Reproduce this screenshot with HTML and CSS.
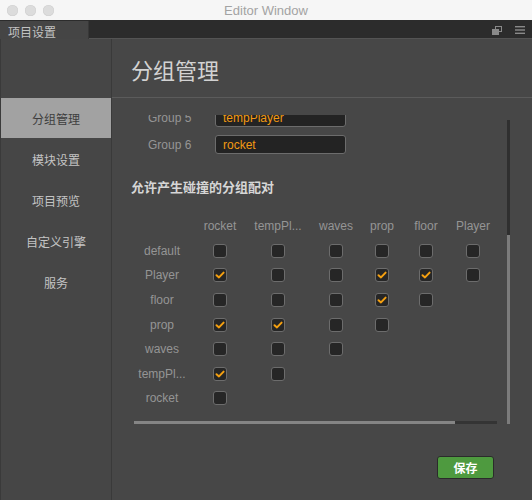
FILE: index.html
```html
<!DOCTYPE html>
<html lang="zh">
<head>
  <meta charset="UTF-8" />
  <title>Editor Window</title>
  <link rel="stylesheet" href="styles.css">
</head>
<body>
  <div class="window">
    <div class="titlebar">
      <div class="lights">
        <span class="light"></span>
        <span class="light"></span>
        <span class="light"></span>
      </div>
      <div class="title">Editor Window</div>
    </div>

    <div class="tabbar">
      <div class="tab">项目设置</div>
      <div class="tab-tools">
        <svg width="10" height="9" viewBox="0 0 10 9">
          <rect x="3.5" y="0.5" width="6" height="5" fill="none" stroke="#8a8a8a" stroke-width="1"/>
          <rect x="0.5" y="3.5" width="6" height="5" fill="#8a8a8a" stroke="#8a8a8a" stroke-width="1"/>
        </svg>
        <svg width="10" height="8" viewBox="0 0 10 8">
          <rect x="0" y="0" width="10" height="1.4" fill="#8a8a8a"/>
          <rect x="0" y="3.3" width="10" height="1.4" fill="#8a8a8a"/>
          <rect x="0" y="6.6" width="10" height="1.4" fill="#8a8a8a"/>
        </svg>
      </div>
    </div>

    <div class="panel">
      <div class="sidebar">
        <div class="nav-item active">分组管理</div>
        <div class="nav-item">模块设置</div>
        <div class="nav-item">项目预览</div>
        <div class="nav-item">自定义引擎</div>
        <div class="nav-item">服务</div>
      </div>

      <div class="main">
        <div class="main-header">分组管理</div>

        <div class="viewport">
          <div class="content">
            <div class="group-row">
              <span class="group-label">Group 5</span>
              <div class="group-input">tempPlayer</div>
            </div>
            <div class="group-row">
              <span class="group-label">Group 6</span>
              <div class="group-input">rocket</div>
            </div>

            <div class="section-title">允许产生碰撞的分组配对</div>

            <div class="matrix">
              <span></span>
              <span class="col-head">rocket</span>
              <span class="col-head">tempPl...</span>
              <span class="col-head">waves</span>
              <span class="col-head">prop</span>
              <span class="col-head">floor</span>
              <span class="col-head">Player</span>

              <span class="row-head">default</span>
              <span class="cell"><i class="cb"></i></span>
              <span class="cell"><i class="cb"></i></span>
              <span class="cell"><i class="cb"></i></span>
              <span class="cell"><i class="cb"></i></span>
              <span class="cell"><i class="cb"></i></span>
              <span class="cell"><i class="cb"></i></span>

              <span class="row-head">Player</span>
              <span class="cell"><i class="cb on"><svg viewBox="0 0 12 12"><path d="M2.5 6.2 L5 8.4 L9.6 3.6"/></svg></i></span>
              <span class="cell"><i class="cb"></i></span>
              <span class="cell"><i class="cb"></i></span>
              <span class="cell"><i class="cb on"><svg viewBox="0 0 12 12"><path d="M2.5 6.2 L5 8.4 L9.6 3.6"/></svg></i></span>
              <span class="cell"><i class="cb on"><svg viewBox="0 0 12 12"><path d="M2.5 6.2 L5 8.4 L9.6 3.6"/></svg></i></span>
              <span class="cell"><i class="cb"></i></span>

              <span class="row-head">floor</span>
              <span class="cell"><i class="cb"></i></span>
              <span class="cell"><i class="cb"></i></span>
              <span class="cell"><i class="cb"></i></span>
              <span class="cell"><i class="cb on"><svg viewBox="0 0 12 12"><path d="M2.5 6.2 L5 8.4 L9.6 3.6"/></svg></i></span>
              <span class="cell"><i class="cb"></i></span>
              <span></span>

              <span class="row-head">prop</span>
              <span class="cell"><i class="cb on"><svg viewBox="0 0 12 12"><path d="M2.5 6.2 L5 8.4 L9.6 3.6"/></svg></i></span>
              <span class="cell"><i class="cb on"><svg viewBox="0 0 12 12"><path d="M2.5 6.2 L5 8.4 L9.6 3.6"/></svg></i></span>
              <span class="cell"><i class="cb"></i></span>
              <span class="cell"><i class="cb"></i></span>
              <span></span>
              <span></span>

              <span class="row-head">waves</span>
              <span class="cell"><i class="cb"></i></span>
              <span class="cell"><i class="cb"></i></span>
              <span class="cell"><i class="cb"></i></span>
              <span></span>
              <span></span>
              <span></span>

              <span class="row-head">tempPl...</span>
              <span class="cell"><i class="cb on"><svg viewBox="0 0 12 12"><path d="M2.5 6.2 L5 8.4 L9.6 3.6"/></svg></i></span>
              <span class="cell"><i class="cb"></i></span>
              <span></span>
              <span></span>
              <span></span>
              <span></span>

              <span class="row-head">rocket</span>
              <span class="cell"><i class="cb"></i></span>
              <span></span>
              <span></span>
              <span></span>
              <span></span>
              <span></span>
            </div>
          </div>

          <div class="hscroll"><div class="hscroll-thumb"></div></div>
          <div class="vscroll"><div class="vscroll-thumb"></div></div>
        </div>

        <div class="footer">
          <button class="btn-save">保存</button>
        </div>
      </div>
    </div>
  </div>
</body>
</html>
```

FILE: styles.css
```css
body {
  margin: 0;
  background: #474747;
  font-family: "Liberation Sans", "Noto Sans CJK SC", sans-serif;
  font-size: 12px;
}

.window {
  width: 532px;
  height: 500px;
  display: flex;
  flex-direction: column;
  overflow: hidden;
}

/* title bar */
.titlebar {
  height: 20px;
  flex: none;
  background: #f6f6f6;
  display: flex;
  align-items: center;
  position: relative;
}

.lights {
  display: flex;
  gap: 7px;
  padding-left: 7px;
}

.light {
  width: 11px;
  height: 11px;
  border-radius: 50%;
  background: #dcdcdc;
  box-shadow: inset 0 0 0 0.5px #cfcfcf;
}

.title {
  position: absolute;
  left: 0;
  right: 0;
  text-align: center;
  color: #a3a3a3;
  font-size: 13px;
}

/* tab bar */
.tabbar {
  height: 18px;
  flex: none;
  background: #2c2c2c;
  border-bottom: 1px solid #545454;
  display: flex;
  align-items: flex-start;
  justify-content: space-between;
}

.tab {
  width: 89px;
  height: 19px;
  margin-top: 1px;
  box-sizing: border-box;
  padding: 2px 0 0 8px;
  background: #454545;
  border-right: 1px solid #383838;
  color: #c2c2c2;
  font-size: 12px;
}

.tab-tools {
  display: flex;
  align-items: center;
  gap: 13px;
  height: 18px;
  padding: 1px 7px 0 0;
}

/* panel */
.panel {
  flex: 1;
  display: flex;
  min-height: 0;
}

.sidebar {
  width: 110px;
  flex: none;
  background: #464646;
  border-left: 1px solid #3a3a3a;
  border-right: 1px solid #3a3a3a;
  padding-top: 59px;
}

.nav-item {
  height: 40px;
  margin-bottom: 1px;
  display: flex;
  align-items: center;
  justify-content: center;
  color: #c4c4c4;
  font-size: 12px;
}

.nav-item.active {
  background: #a2a2a2;
  color: #3e3e3e;
}

.main {
  flex: 1;
  display: flex;
  flex-direction: column;
  background: #474747;
  min-width: 0;
}

.main-header {
  height: 59px;
  flex: none;
  box-sizing: border-box;
  padding: 20px 0 0 19px;
  border-bottom: 1px solid #5b5b5b;
  color: #d2d2d2;
  font-size: 22px;
  line-height: 26px;
}

.viewport {
  height: 311px;
  margin-top: 17px;
  flex: none;
  overflow: hidden;
  position: relative;
}

.content {
  margin-top: -7px;
  padding-left: 19px;
}

.group-row {
  display: flex;
  align-items: center;
  height: 19px;
  margin-bottom: 8px;
  padding-left: 17px;
}

.group-label {
  width: 67px;
  color: #959595;
}

.group-input {
  width: 131px;
  height: 19px;
  box-sizing: border-box;
  padding: 2px 0 0 7px;
  background: #232323;
  border: 1px solid #6c6c6c;
  border-radius: 3px;
  color: #f29a12;
  font-size: 12px;
}

.section-title {
  margin-top: 26px;
  color: #d6d6d6;
  font-size: 13px;
  font-weight: bold;
  line-height: 16px;
}

.matrix {
  display: grid;
  grid-template-columns: 60px 56px 60px 56px 36px 52px 42px;
  grid-auto-rows: 24.6px;
  margin: 18px 0 0 1px;
  color: #959595;
}

.col-head,
.row-head,
.cell {
  display: flex;
  align-items: center;
  justify-content: center;
}

.cb {
  width: 14px;
  height: 14px;
  box-sizing: border-box;
  background: #262626;
  border: 1px solid #6c6c6c;
  border-radius: 3px;
  display: flex;
  align-items: center;
  justify-content: center;
}

.cb svg {
  width: 12px;
  height: 12px;
}

.cb svg path {
  fill: none;
  stroke: #f5a010;
  stroke-width: 2;
  stroke-linecap: round;
  stroke-linejoin: round;
}

/* scrollbars drawn over the viewport */
.hscroll {
  position: absolute;
  left: 22px;
  top: 306px;
  width: 363px;
  height: 3px;
  background: #343434;
}

.hscroll-thumb {
  width: 321px;
  height: 100%;
  background: #858585;
}

.vscroll {
  position: absolute;
  left: 395px;
  top: 5px;
  width: 3px;
  height: 304px;
  background: #2f2f2f;
  display: flex;
  flex-direction: column;
  justify-content: flex-end;
}

.vscroll-thumb {
  height: 189px;
  background: #7c7c7c;
}

.footer {
  flex: 1;
  display: flex;
  justify-content: flex-end;
  align-items: flex-start;
  padding: 30px 38px 0 0;
}

.btn-save {
  width: 57px;
  height: 23px;
  background: #4e9a3f;
  border: 1px solid #2b2b2b;
  border-radius: 3px;
  color: #ffffff;
  font-family: inherit;
  font-size: 12px;
  font-weight: bold;
  padding: 0;
}
```
